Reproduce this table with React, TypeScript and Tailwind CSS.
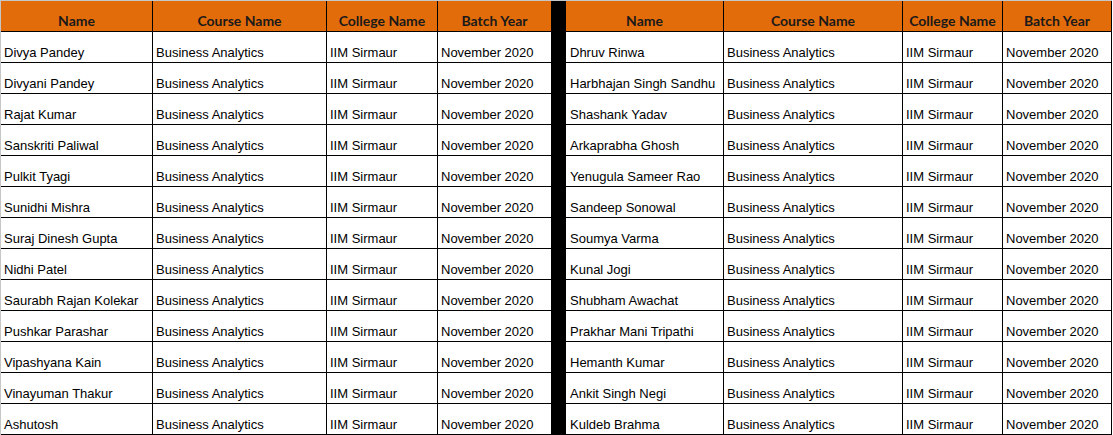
const leftNames = [
  "Divya Pandey",
  "Divyani Pandey",
  "Rajat Kumar",
  "Sanskriti Paliwal",
  "Pulkit Tyagi",
  "Sunidhi Mishra",
  "Suraj Dinesh Gupta",
  "Nidhi Patel",
  "Saurabh Rajan Kolekar",
  "Pushkar Parashar",
  "Vipashyana Kain",
  "Vinayuman Thakur",
  "Ashutosh",
];

const rightNames = [
  "Dhruv Rinwa",
  "Harbhajan Singh Sandhu",
  "Shashank Yadav",
  "Arkaprabha Ghosh",
  "Yenugula Sameer Rao",
  "Sandeep Sonowal",
  "Soumya Varma",
  "Kunal Jogi",
  "Shubham Awachat",
  "Prakhar Mani Tripathi",
  "Hemanth Kumar",
  "Ankit Singh Negi",
  "Kuldeb Brahma",
];

const headers = ["Name", "Course Name", "College Name", "Batch Year"];

const HeadCell = ({ label }: { label: string }) => (
  <div className="flex items-end justify-center bg-[#e36c0a] pb-[3px] font-['Lato',sans-serif] text-[14px] font-bold leading-none text-[#1a1a1a]">
    {label}
  </div>
);

const Cell = ({ text, pad = "pl-[3px]" }: { text: string; pad?: string }) => (
  <div
    className={`flex items-end overflow-hidden whitespace-nowrap bg-white pb-[3px] font-['Liberation_Sans',Arial,sans-serif] text-[13px] leading-none text-black ${pad}`}
  >
    {text}
  </div>
);

const App = () => {
  return (
    <div className="min-h-screen bg-white">
      <div className="w-fit border-l border-t border-[#c6c6c6]">
        <div className="grid w-fit auto-rows-[30px] grid-cols-[151px_173px_110px_113px_13px_157px_178px_99px_108px] gap-px bg-black pb-px pr-px">
          {/* Header */}
          {headers.map((h) => (
            <HeadCell key={`l-${h}`} label={h} />
          ))}
          <div className="bg-black" />
          {headers.map((h) => (
            <HeadCell key={`r-${h}`} label={h} />
          ))}

          {/* Rows */}
          {leftNames.map((name, i) => (
            <div key={name} className="contents">
              <Cell text={name} />
              <Cell text="Business Analytics" />
              <Cell text="IIM Sirmaur" />
              <Cell text="November 2020" />
              <div className="bg-black" />
              <Cell text={rightNames[i]} pad="pl-[4px]" />
              <Cell text="Business Analytics" />
              <Cell text="IIM Sirmaur" />
              <Cell text="November 2020" />
            </div>
          ))}
        </div>
      </div>
    </div>
  );
};

export default App;
